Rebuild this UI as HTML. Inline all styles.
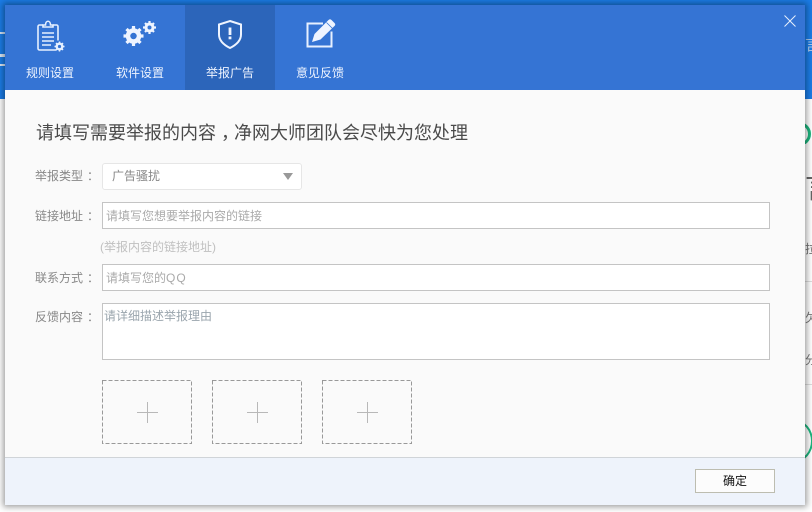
<!DOCTYPE html>
<html lang="zh">
<head>
<meta charset="utf-8">
<title>举报广告</title>
<style>
html,body{margin:0;padding:0;width:812px;height:512px;overflow:hidden;background:#fff}
body{position:relative;font-family:"Liberation Sans","Noto Sans CJK SC",sans-serif;font-size:12px}
.a{position:absolute}
.t{position:absolute;white-space:nowrap;line-height:16px}
.c{position:relative;left:4px}
.bgtop{left:0;top:0;width:812px;height:99px;background:#1b7ce6}
.dlg{left:5px;top:5px;width:800px;height:500px;background:#fafafa;box-shadow:0 0 6px 2px rgba(0,0,0,.38)}
.head{left:5px;top:5px;width:800px;height:85px;background:#3574d4}
.tab{position:absolute;top:5px;width:90px;height:85px}
.tab .l{position:absolute;left:0;right:0;top:60px;text-align:center;color:#eef4ff;font-size:12px;line-height:16px}
.tab svg{position:absolute;left:0;top:0}
.lab{color:#888;left:35px}
.inp{position:absolute;left:102px;width:666px;background:#fff;border:1px solid #c4c4c4}
.ph{color:#aaa;left:106px}
.box{position:absolute;top:380px;width:90px;height:64px}
.box svg{position:absolute;left:0;top:0}
</style>
</head>
<body>
<div class="a bgtop"></div>
<div class="t" style="left:805px;top:37px;color:#a9c9ee;font-size:16px;line-height:18px;width:7px;overflow:hidden">言</div>
<div class="a" style="left:0;top:32px;width:5px;height:2px;background:#cfe2f8"></div>
<div class="a" style="left:0;top:54px;width:5px;height:3px;background:#dce9f8"></div>
<div class="a" style="left:0;top:64px;width:5px;height:2px;background:#dce9f8"></div>
<div class="a" style="left:795px;top:122px;width:17px;height:22px;overflow:hidden"><div class="a" style="left:-8px;top:0;width:18px;height:18px;border:3px solid #1db57e;border-radius:50%"></div></div>
<div class="t" style="left:805px;top:171px;font-size:30px;line-height:36px;color:#666;width:7px;overflow:hidden">言</div>
<div class="t" style="left:805px;top:241px;color:#777;width:7px;overflow:hidden">拉</div>
<div class="a" style="left:805px;top:281px;width:7px;height:1px;background:#ddd"></div>
<div class="t" style="left:805px;top:310px;color:#777;width:7px;overflow:hidden">欠</div>
<div class="t" style="left:805px;top:352px;color:#777;width:7px;overflow:hidden">分</div>
<div class="a" style="left:805px;top:384px;width:7px;height:1px;background:#ddd"></div>
<div class="a" style="left:785px;top:420px;width:27px;height:46px;overflow:hidden"><div class="a" style="left:-8px;top:0;width:32px;height:38px;border:2px solid #1db57e;border-radius:50%"></div></div>

<div class="a dlg"></div>
<div class="a head"></div>

<div class="tab" style="left:5px">
<svg width="90" height="60" fill="none" stroke="#e6f0ff" stroke-width="1.6">
<path d="M38 20h-3.500a1.500 1.500 0 0 0-1.500 1.500v22a1.500 1.500 0 0 0 1.500 1.500h17"/>
<path d="M48 20h3.500a1.500 1.500 0 0 1 1.500 1.500v14"/>
<path d="M38 22v-2h2.500c0-5 5-5 5 0h2.500v2z"/>
<path d="M37 28h12M37 32h12M37 36h12M37 40h9"/>
<circle cx="54.500" cy="41.500" r="2.800" stroke-width="2.400"/>
<path d="M54.500 36.500v1.500M54.500 45v1.500M49.500 41.500h1.500M58 41.500h1.500M51 38l1 1M57 44l1 1M58 38l-1 1M52 44l-1 1" stroke-width="1.500"/>
</svg>
<div class="l">规则设置</div>
</div>

<div class="tab" style="left:95px">
<svg width="90" height="60" fill="none" stroke="#eef4ff">
<circle cx="38.500" cy="31" r="5.500" stroke-width="4.500"/>
<path d="M38.500 21v20M28.500 31h20M31.500 24l14 14M45.500 24l-14 14" stroke-width="3.200" stroke-dasharray="3.200 13.600"/>
<circle cx="54.500" cy="22.500" r="3.500" stroke-width="3"/>
<path d="M54.500 16v13M48 22.500h13M50 18l9 9M59 18l-9 9" stroke-width="2.200" stroke-dasharray="2.200 8.600"/>
</svg>
<div class="l">软件设置</div>
</div>

<div class="tab" style="left:185px;background:#2c65ba">
<svg width="90" height="60" fill="none" stroke="#eef4ff">
<path d="M45 16l11 3.500v10c0 6.500-5 10.500-11 13.500c-6-3-11-7-11-13.500v-10z" stroke-width="2"/>
<path d="M45 22.500v7.500" stroke-width="2.800"/>
<path d="M45 31.500v2.800" stroke-width="2.800"/>
</svg>
<div class="l">举报广告</div>
</div>

<div class="tab" style="left:275px">
<svg width="90" height="60" fill="none">
<path d="M48 18.500h-15.500v23h24v-15" stroke="#e6f0ff" stroke-width="2"/>
<path d="M37 37l2.500-8l14-14c1-1 2-1 3 0l3 3c1 1 1 2 0 3l-14 13.500z" fill="#eef4ff"/>
<path d="M51.500 17.500l6 6" stroke="#3574d4" stroke-width=".8"/>
</svg>
<div class="l">意见反馈</div>
</div>

<svg class="a" style="left:783px;top:14px" width="14" height="14" fill="none" stroke="#e8f0fc" stroke-width="1"><path d="M1.500 1.500l11 11M12.500 1.500l-11 11"/></svg>

<div class="t" style="left:36px;top:121px;font-size:18px;line-height:24px;color:#4a4a4a">请填写需要举报的内容<span style="position:relative;left:5px">，</span>净网大师团队会尽快为您处理</div>

<div class="t lab" style="top:168px">举报类型<span class="c">：</span></div>
<div class="a" style="left:102px;top:163px;width:198px;height:25px;background:#fff;border:1px solid #e6e6e6;border-radius:3px"></div>
<div class="t" style="left:112px;top:168px;color:#888">广告骚扰</div>
<div class="a" style="left:283px;top:173px;width:0;height:0;border-left:5px solid transparent;border-right:5px solid transparent;border-top:7px solid #999"></div>

<div class="t lab" style="top:208px">链接地址<span class="c">：</span></div>
<div class="inp" style="top:202px;height:25px"></div>
<div class="t ph" style="top:208px">请填写您想要举报内容的链接</div>
<div class="t" style="left:100px;top:239px;color:#c0c0c0">(举报内容的链接地址)</div>

<div class="t lab" style="top:270px">联系方式<span class="c">：</span></div>
<div class="inp" style="top:264px;height:25px"></div>
<div class="t ph" style="top:270px">请填写您的<span style="letter-spacing:1px">QQ</span></div>

<div class="t lab" style="top:309px">反馈内容<span class="c">：</span></div>
<div class="inp" style="top:303px;height:55px"></div>
<div class="t" style="left:104px;top:308px;color:#9aa5ad">请详细描述举报理由</div>

<div class="box" style="left:102px"><svg width="90" height="64" fill="none"><rect x=".5" y=".5" width="89" height="63" stroke="#999" stroke-dasharray="4 2"/><path d="M35 32.500h21M45.500 22v21" stroke="#b8b8b8"/></svg></div>
<div class="box" style="left:212px"><svg width="90" height="64" fill="none"><rect x=".5" y=".5" width="89" height="63" stroke="#999" stroke-dasharray="4 2"/><path d="M35 32.500h21M45.500 22v21" stroke="#b8b8b8"/></svg></div>
<div class="box" style="left:322px"><svg width="90" height="64" fill="none"><rect x=".5" y=".5" width="89" height="63" stroke="#999" stroke-dasharray="4 2"/><path d="M35 32.500h21M45.500 22v21" stroke="#b8b8b8"/></svg></div>

<div class="a" style="left:5px;top:457px;width:800px;height:48px;background:#eef3fb;border-top:1px solid #d0d4d8;box-sizing:border-box"></div>
<div class="a" style="left:695px;top:469px;width:78px;height:22px;background:#fcfcfc;border:1px solid #bdbdb0;text-align:center;line-height:22px;color:#111">确定</div>
</body>
</html>
